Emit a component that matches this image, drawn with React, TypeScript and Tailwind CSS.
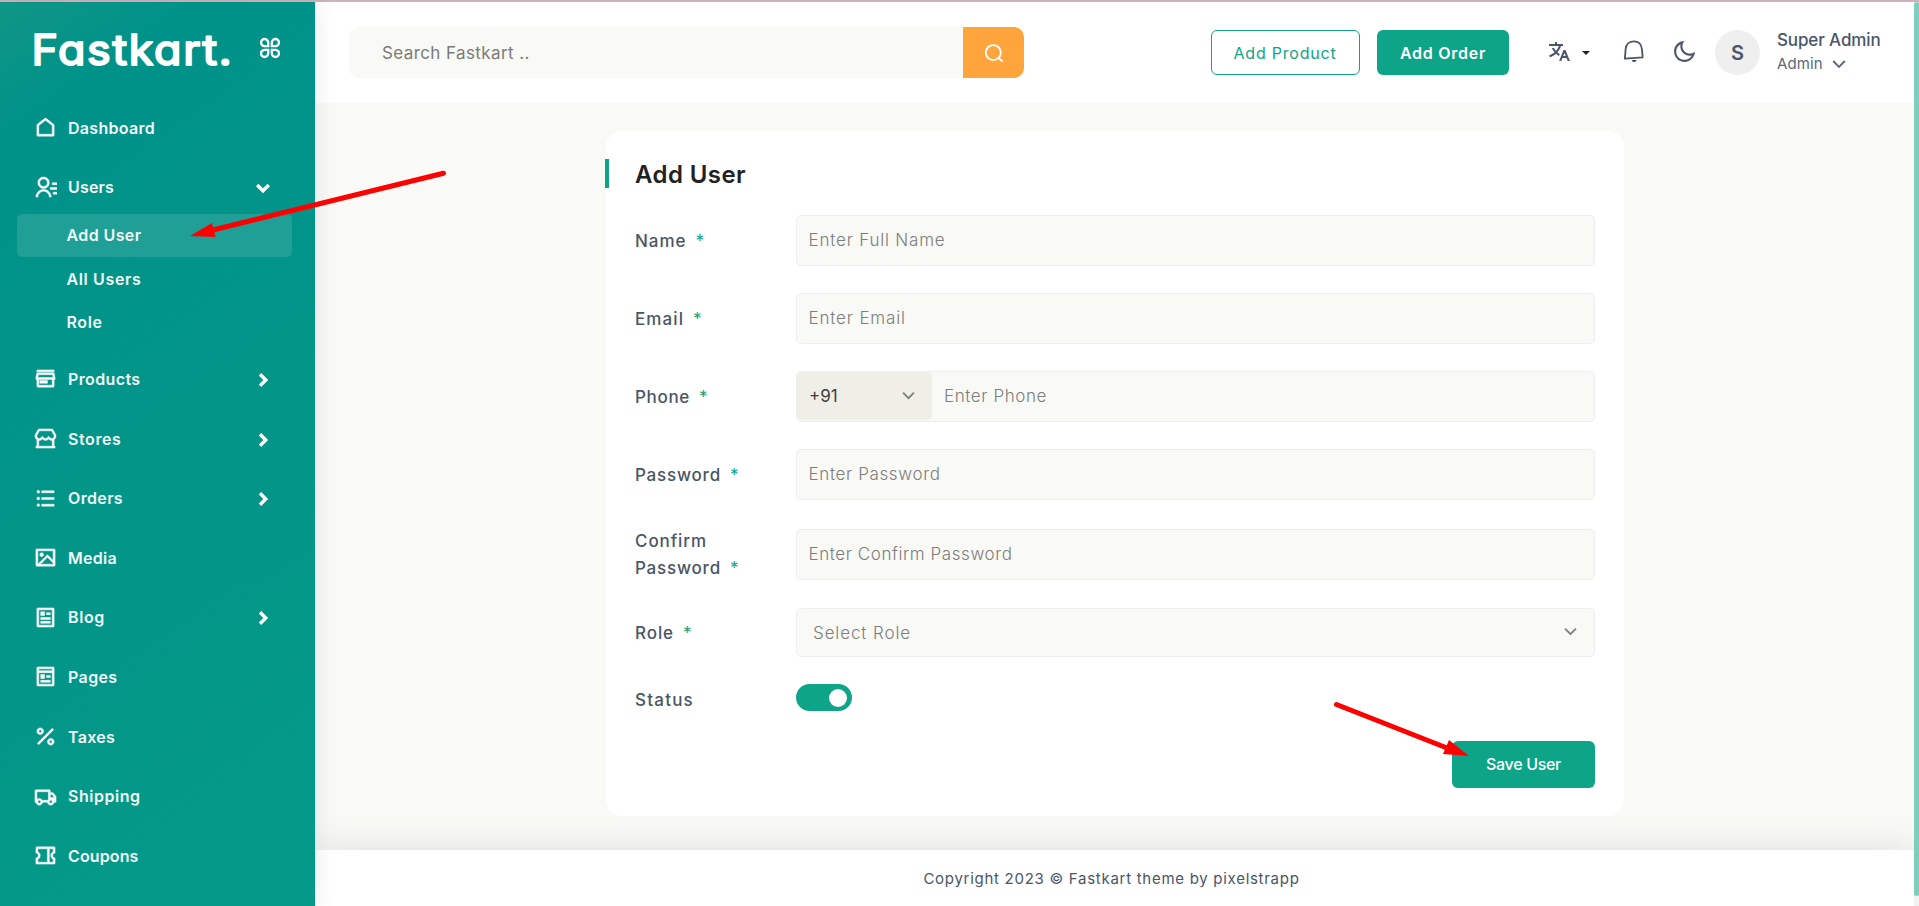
import React from "react";
import {
  RiHomeLine, RiContactsLine, RiStore3Line, RiStore2Line, RiListUnordered, RiImageLine, RiArticleLine,
  RiPagesLine, RiPercentLine, RiTruckLine, RiCoupon2Line, RiMoonLine, RiTranslate2,
} from "react-icons/ri";

type IconType = React.ComponentType<{ className?: string }>;

function Chevron({ className, w = 2 }: { className?: string; w?: number }) {
  return (
    <svg viewBox="0 0 16 16" className={className} fill="none" stroke="currentColor" strokeWidth={w}>
      <path d="M2.2 5 8 10.8 13.8 5" />
    </svg>
  );
}

function Logo() {
  return (
    <svg viewBox="0 0 212 64" className="-ml-[4px] h-[64px] w-[212px]">
      <text
        x="1.5" y="46.5" textLength="202" lengthAdjust="spacingAndGlyphs" fontSize="42" fontWeight="400"
        fill="white" stroke="white" strokeWidth="2" strokeLinejoin="round"
        className="tracking-[1.6px] [font-feature-settings:'cv11']"
      >
        Fastkart.
      </text>
    </svg>
  );
}

function Clover() {
  return (
    <svg viewBox="0 0 22 22" className="h-[22px] w-[22px]" fill="none" stroke="white" strokeWidth="2.3">
      <path d="M9.2 9.2H5.5A3.6 3.6 0 1 1 9.2 5.5zM12.8 9.2V5.5a3.6 3.6 0 1 1 3.7 3.7zM9.2 12.8v3.7a3.6 3.6 0 1 1-3.7-3.7zM12.8 12.8h3.7a3.6 3.6 0 1 1-3.7 3.7z" />
    </svg>
  );
}

function Bell() {
  return (
    <svg viewBox="0 0 22 24" className="h-6 w-[22px]" fill="none" stroke="#4a5568" strokeWidth="1.8" strokeLinejoin="round">
      <path d="M1.9 19.6 2.6 10.4C2.9 5.4 6.4 2.4 10.9 2.4c4.6 0 7.7 3 8 7.8l.8 8.2z" />
      <path d="M8.6 21h5c-.5 1.4-1.4 2-2.5 2s-2-.6-2.5-2z" fill="#4a5568" stroke="none" />
    </svg>
  );
}

function NavItem({ icon: Icon, label, arrow, tracking }: { icon: IconType; label: string; arrow?: "right" | "down"; tracking: string }) {
  return (
    <div className="flex h-[59.6px] items-center pl-[34px] pr-[44px] text-white">
      <Icon className="h-[23px] w-[23px] [stroke-width:0.5px]" />
      <span className={"ml-[11px] text-[16px] font-semibold text-[#f0faf8] " + tracking}>{label}</span>
      {arrow && <Chevron w={3.4} className={arrow === "right" ? "mt-[2px] ml-auto h-4 w-4 -rotate-90" : "mt-[2px] ml-auto h-4 w-4"} />}
    </div>
  );
}

const bottomNav: { icon: IconType; label: string; tracking: string; arrow?: "right" }[] = [
  { icon: RiStore3Line, label: "Products", tracking: "tracking-[0.38px]", arrow: "right" },
  { icon: RiStore2Line, label: "Stores", tracking: "tracking-[0.6px]", arrow: "right" },
  { icon: RiListUnordered, label: "Orders", tracking: "tracking-[0.35px]", arrow: "right" },
  { icon: RiImageLine, label: "Media", tracking: "tracking-[0.28px]" },
  { icon: RiArticleLine, label: "Blog", tracking: "tracking-[0.63px]", arrow: "right" },
  { icon: RiPagesLine, label: "Pages", tracking: "tracking-[0.38px]" },
  { icon: RiPercentLine, label: "Taxes", tracking: "tracking-[0.28px]" },
  { icon: RiTruckLine, label: "Shipping", tracking: "tracking-[0.52px]" },
  { icon: RiCoupon2Line, label: "Coupons", tracking: "tracking-[0.12px]" },
];

function Sidebar() {
  return (
    <aside className="z-10 w-[315px] shrink-0 bg-[linear-gradient(145deg,#109685_0%,#009289_12%,#039688_60%,#059a88_100%)] shadow-[0_0_21px_rgba(89,102,122,0.14)]">
      <div className="flex h-[96px] items-start pl-[34px] pr-[34px] pt-[16px]">
        <Logo />
        <div className="ml-auto pt-[19px]"><Clover /></div>
      </div>
      <NavItem icon={RiHomeLine} label="Dashboard" tracking="tracking-[0.29px]" />
      <NavItem icon={RiContactsLine} label="Users" tracking="tracking-[0.17px]" arrow="down" />
      <div className="-mt-[3px] flex h-[135px] flex-col px-[17px] text-[16px] font-semibold text-[#f0faf8]">
        <div className="flex h-[43px] w-[275px] items-center rounded-[5px] bg-[#1f9f95] pb-[2px] pl-[49.5px] tracking-[0.4px]">Add User</div>
        <div className="mt-[1px] flex h-[43px] items-center pb-[2px] pl-[49.5px] tracking-[0.64px]">All Users</div>
        <div className="flex h-[43px] items-center pb-[2px] pl-[49.5px] tracking-[0.59px]">Role</div>
      </div>
      {bottomNav.map((n) => (
        <NavItem key={n.label} icon={n.icon} label={n.label} tracking={n.tracking} arrow={n.arrow} />
      ))}
    </aside>
  );
}

function Header() {
  return (
    <header className="flex h-[101px] items-center bg-white pl-[34px] pr-[33px] text-[#4a5568]">
      <div className="flex h-[51px] w-[675px] overflow-hidden rounded-[10px] bg-[#f9f9f6]">
        <div className="flex flex-1 items-center pl-[33px] pt-[2px] text-[17px] tracking-[0.4px] text-[#7b7b79]">Search Fastkart ..</div>
        <div className="flex w-[61px] items-center justify-center bg-[#ffa53b] text-white">
          <svg viewBox="0 0 20 20" className="h-5 w-5" fill="none" stroke="currentColor" strokeWidth="1.9" strokeLinecap="round">
            <circle cx="9.3" cy="9.6" r="7.5" />
            <path d="m15.4 15.6 2.6 2.6" />
          </svg>
        </div>
      </div>
      <div className="ml-[187px] flex h-[45px] w-[149px] items-center justify-center rounded-[6px] border border-[#0da487] pr-[1px] text-[16px] tracking-[0.79px] text-[#0da487]">Add Product</div>
      <div className="ml-[17px] flex h-[45px] w-[132px] items-center justify-center rounded-[6px] bg-[#0da487] text-[16px] font-semibold tracking-[0.72px] text-white">Add Order</div>
      <RiTranslate2 className="-mt-[2px] ml-[38px] h-[24px] w-[24px]" />
      <svg viewBox="0 0 8 4" className="ml-[11px] h-1 w-2"><path d="M0 0h8L4 4z" fill="#212529" /></svg>
      <div className="-mt-[3px] ml-[33px]"><Bell /></div>
      <RiMoonLine className="-mt-[2px] ml-[27px] h-[25px] w-[25px]" />
      <div className="ml-[18px] flex h-[45px] w-[45px] items-center justify-center rounded-full bg-[#efefef] text-[20px] font-semibold">S</div>
      <div className="-mt-[2px] ml-[17px] flex flex-col">
        <span className="text-[17px] font-medium leading-[24px] tracking-[-0.12px]">Super Admin</span>
        <span className="flex items-center text-[15px] leading-[23px] tracking-[0.1px] text-[#5d6779]">
          Admin <Chevron className="ml-[8px] h-4 w-4" w={1.9} />
        </span>
      </div>
    </header>
  );
}

function Label({ text, tracking }: { text: string; tracking: string }) {
  return (
    <span className="flex items-center text-[17px] font-medium leading-[27px] text-[#4a5568]">
      <span className={tracking}>{text}</span>
      <span className="ml-[9px] font-normal text-[#0da487]">*</span>
    </span>
  );
}

const boxClass = "flex w-[799px] items-center rounded-[5px] border border-[#eeeeee] bg-[#f9f9f6] text-[17px] font-light text-[#7d7d7d] ";

function Field({ label, lt, placeholder, pt }: { label: string; lt: string; placeholder: string; pt: string }) {
  return (
    <div className="mb-[27px] flex h-[51px] items-center">
      <div className="w-[161px] pt-[1px]"><Label text={label} tracking={lt} /></div>
      <div className={boxClass + "h-[51px] pl-[11.5px] " + pt}>{placeholder}</div>
    </div>
  );
}

function UserForm() {
  return (
    <section className="ml-[291px] mt-[28px] flex h-[685px] w-[1018px] flex-col rounded-[16px] bg-white pl-[29px] pr-[29px] pt-[28px]">
      <div className="-ml-[30px] flex h-[29px] items-center border-l-[4px] border-[#0da487] pl-[26px] pt-[2px] text-[24px] font-semibold tracking-[0.42px] text-[#222222]">
        Add User
      </div>
      <div className="mt-[27px]">
        <Field label="Name" lt="tracking-[1px]" placeholder="Enter Full Name" pt="tracking-[0.81px]" />
        <Field label="Email" lt="tracking-[1.1px]" placeholder="Enter Email" pt="tracking-[0.85px]" />
        <div className="mb-[27px] flex h-[51px] items-center">
          <div className="w-[161px] pt-[1px]"><Label text="Phone" tracking="tracking-[0.68px]" /></div>
          <div className={boxClass + "h-[51px] tracking-[0.6px]"}>
            <div className="mb-[1px] flex h-[48px] w-[135px] items-center justify-between rounded-[5px] bg-[#efefe8] pl-[12px] pr-4 font-normal tracking-normal text-[#3d3d3d]">
              <span className="pt-[1px]">+91</span>
              <Chevron className="mb-[2px] h-[15px] w-[15px] text-[#808080]" />
            </div>
            <span className="ml-3">Enter Phone</span>
          </div>
        </div>
        <Field label="Password" lt="tracking-[0.79px]" placeholder="Enter Password" pt="tracking-[0.64px]" />
        <div className="-mt-[1px] mb-[26px] flex h-[56px] items-center">
          <div className="w-[161px] pt-[1px] text-[17px] font-medium leading-[27px] text-[#4a5568]">
            <div className="tracking-[0.91px]">Confirm</div>
            <Label text="Password" tracking="tracking-[0.79px]" />
          </div>
          <div className={boxClass + "h-[51px] pl-[11.5px] pt-[1px] tracking-[0.58px]"}>Enter Confirm Password</div>
        </div>
        <div className="flex h-[49px] items-center">
          <div className="w-[161px] pt-[2px]"><Label text="Role" tracking="tracking-[0.92px]" /></div>
          <div className={boxClass + "h-[49px] justify-between pl-4 pr-4 tracking-[0.89px]"}>
            <span className="pt-[2px]">Select Role</span>
            <Chevron className="mb-[2px] h-[15px] w-[15px] text-[#808080]" />
          </div>
        </div>
        <div className="mt-[27px] flex h-[30px] items-start">
          <div className="w-[161px] pt-[3px] text-[17px] font-medium leading-[27px] tracking-[1.22px] text-[#4a5568]">Status</div>
          <div className="flex h-[27px] w-[56px] items-center justify-end rounded-full bg-[#0da487] pr-[5px]">
            <div className="h-[18px] w-[18px] rounded-full bg-white" />
          </div>
        </div>
      </div>
      <div className="ml-auto mt-[27px] flex h-[47px] w-[143px] shrink-0 items-center justify-center rounded-[6px] bg-[#0da487] pb-[1px] text-[16px] font-medium tracking-[-0.31px] text-white">
        Save User
      </div>
    </section>
  );
}

function Arrows() {
  return (
    <svg viewBox="0 0 1919 906" className="pointer-events-none absolute inset-0 z-20 h-full w-full" fill="#ff0000" stroke="#ff0000" strokeLinecap="round">
      <path d="M443.5 173.2 213 230" strokeWidth="5" />
      <path d="M190 236 212 223 215.5 237z" stroke="none" />
      <path d="M1336.5 704.5 1447 748" strokeWidth="5" />
      <path d="M1469 756 1449 740 1443 754z" stroke="none" />
    </svg>
  );
}

export default function App() {
  return (
    <div className="relative flex h-[906px] w-[1919px] flex-col overflow-hidden bg-white font-['Inter',sans-serif]">
      <div className="h-[2px] shrink-0 bg-[#cdb2bb]" />
      <div className="flex h-[904px]">
        <Sidebar />
        <main className="flex w-[1599px] shrink-0 flex-col bg-[#f9f9f6]">
          <Header />
          <div className="flex-1"><UserForm /></div>
          <footer className="flex h-[56px] items-center justify-center bg-white pr-[6px] pt-[2px] text-[15px] tracking-[0.72px] text-[#4a5568] shadow-[0_0_35px_rgba(89,90,92,0.17)]">
            Copyright 2023 © Fastkart theme by pixelstrapp
          </footer>
        </main>
        <div className="h-[904px] w-[5px] bg-[#f1f1f1]">
          <div className="h-[894px] rounded-[3px] bg-[#7fcdbc]" />
        </div>
      </div>
      <Arrows />
    </div>
  );
}
